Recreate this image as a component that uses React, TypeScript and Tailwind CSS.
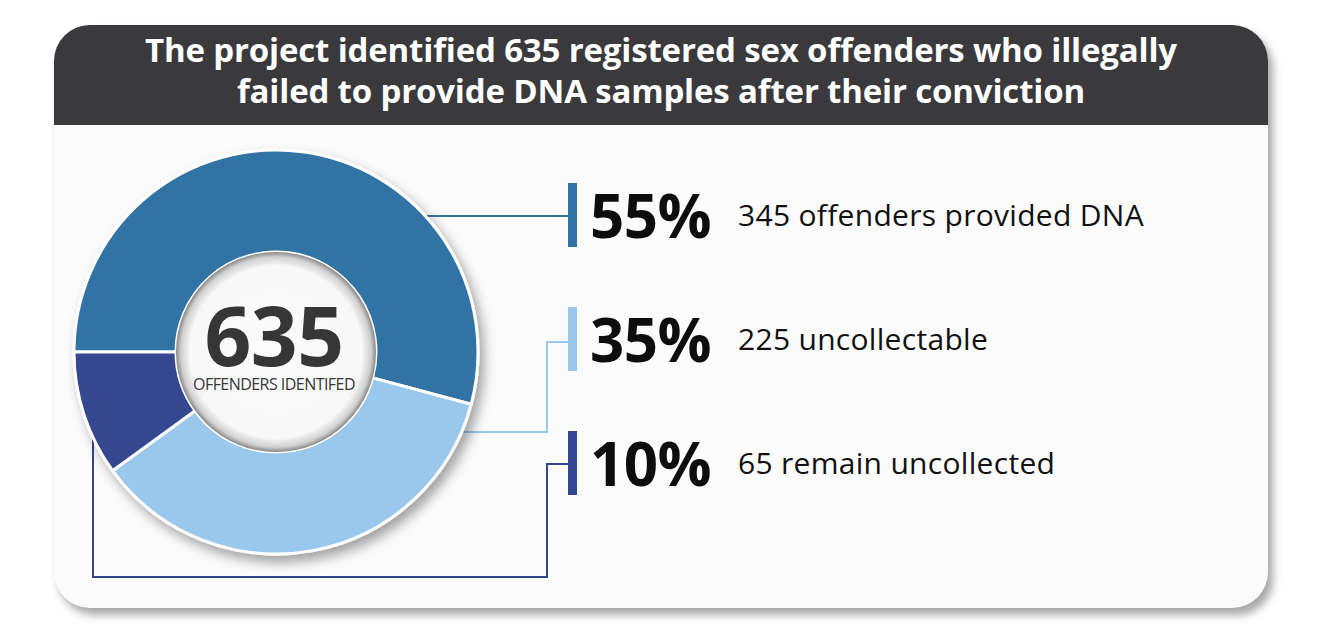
const CX = 222;
const CY = 227;
const R_OUT = 202;
const R_IN = 100;

type Slice = { from: number; to: number; color: string };

const slices: Slice[] = [
	{ from: 180, to: 375, color: '#3273a5' },
	{ from: 15, to: 144, color: '#9ac8ec' },
	{ from: 144, to: 180, color: '#34468f' },
];

const pt = (deg: number, r: number) => {
	const a = (deg * Math.PI) / 180;
	return `${(CX + r * Math.cos(a)).toFixed(2)} ${(CY + r * Math.sin(a)).toFixed(2)}`;
};

const slicePath = ({ from, to }: Slice) => {
	const large = to - from > 180 ? 1 : 0;
	return [
		`M ${pt(from, R_OUT)}`,
		`A ${R_OUT} ${R_OUT} 0 ${large} 1 ${pt(to, R_OUT)}`,
		`L ${pt(to, R_IN)}`,
		`A ${R_IN} ${R_IN} 0 ${large} 0 ${pt(from, R_IN)}`,
		'Z',
	].join(' ');
};

const legend = [
	{ pct: '55%', label: '345 offenders provided DNA', bar: 'bg-[#3273a5]' },
	{ pct: '35%', label: '225 uncollectable', bar: 'bg-[#9ac8ec]' },
	{ pct: '10%', label: '65 remain uncollected', bar: 'bg-[#34468f]' },
];

const Donut = () => {
	return (
		<div className="relative w-[514px] h-[483px] shrink-0">
			<svg width={514} height={483} viewBox="0 0 514 483" className="block">
				<defs>
					<filter id="donutShadow" x="-20%" y="-20%" width="140%" height="140%">
						<feDropShadow dx="5" dy="7" stdDeviation="6" floodColor="#000" floodOpacity="0.35" />
					</filter>
					<radialGradient id="hole" cx="50%" cy="50%" r="50%">
						<stop offset="0" stopColor="#fbfbfb" />
						<stop offset="0.86" stopColor="#f8f8f8" />
						<stop offset="0.95" stopColor="#d0d0d0" />
						<stop offset="1" stopColor="#888" />
					</radialGradient>
				</defs>

				{/* leader lines sit under the ring */}
				<g fill="none" strokeWidth={2}>
					<polyline points="360,91 514,91" stroke="#3273a5" />
					<polyline points="395,307 493,307 493,217 514,217" stroke="#9ac8ec" />
					<polyline points="39,300 39,452 493,452 493,339 514,339" stroke="#34468f" />
				</g>

				<g filter="url(#donutShadow)">
					{slices.map((s) => (
						<path key={s.from} d={slicePath(s)} fill={s.color} stroke="#fff" strokeWidth={3} strokeLinejoin="round" />
					))}
				</g>
				<circle cx={CX} cy={CY} r={R_IN} fill="url(#hole)" />
			</svg>

			{/* centre label over the hole */}
			<div className="absolute left-[120px] top-[168px] w-[200px] flex flex-col items-center text-[#363636]">
				<span className="text-[82px] leading-none font-bold tracking-[-0.006em]">635</span>
				<span className="mt-[1px] text-[16px] leading-none tracking-[-0.034em] whitespace-nowrap">
					OFFENDERS IDENTIFED
				</span>
			</div>
		</div>
	);
};

const App = () => {
	return (
		<div className="w-full h-[640px] bg-white pt-[25px] pl-[54px] font-['Open_Sans',sans-serif]">
			<div className="w-[1214px] h-[583px] rounded-[36px] bg-[#fbfbfb] overflow-hidden flex flex-col shadow-[5px_7px_8px_rgba(0,0,0,0.35)]">
				<div className="h-[100px] shrink-0 bg-[#3a3a3c] text-white text-center font-bold text-[33px] leading-[41px] tracking-[-0.005em] pt-[4px]">
					The project identified 635 registered sex offenders who illegally
					<br />
					failed to provide DNA samples after their conviction
				</div>
				<div className="flex flex-1">
					<Donut />
					<div className="flex flex-col pt-[58px] gap-[60px]">
						{legend.map((row) => (
							<div key={row.pct} className="flex items-center h-[64px]">
								<div className={`w-[9px] h-[64px] shrink-0 ${row.bar}`} />
								<span className="ml-[13px] w-[122px] text-[60px] leading-none font-bold text-[#0d0d0d] tracking-[-0.01em]">
									{row.pct}
								</span>
								<span className="ml-[26px] text-[30px] leading-none text-[#111] tracking-[0.01em] whitespace-nowrap">
									{row.label}
								</span>
							</div>
						))}
					</div>
				</div>
			</div>
		</div>
	);
};

export default App;
